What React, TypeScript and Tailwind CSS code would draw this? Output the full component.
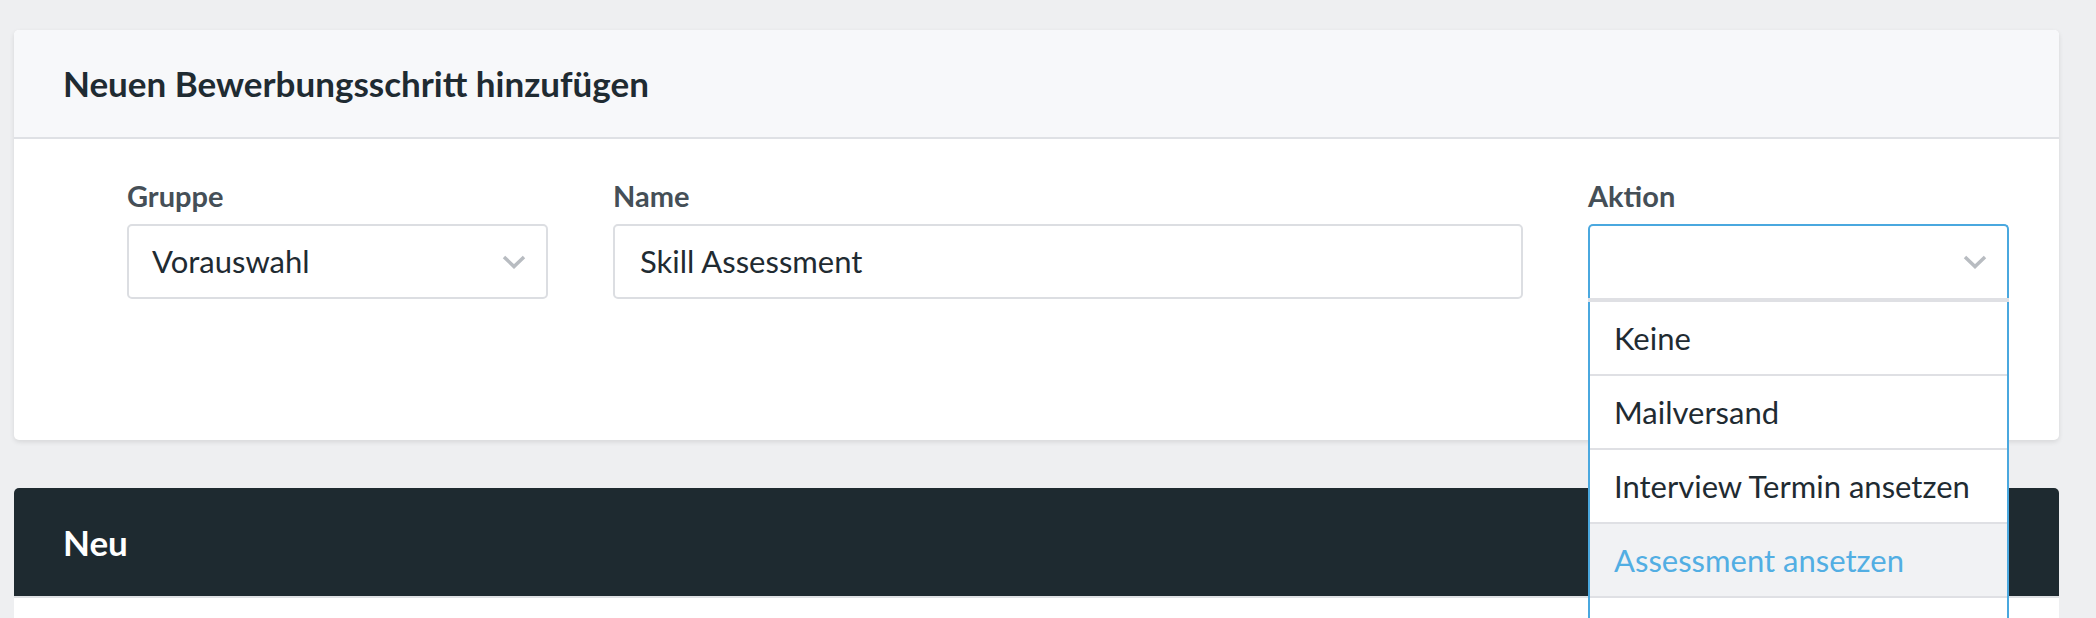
import React from 'react';

function Chevron() {
  return (
    <svg width="24" height="14" viewBox="0 0 24 14" className="shrink-0">
      <polyline points="2,2 12,11.5 22,2" fill="none" stroke="#b8bcc1" strokeWidth="3.5" />
    </svg>
  );
}

const actions = ['Keine', 'Mailversand', 'Interview Termin ansetzen', 'Assessment ansetzen'];

export default function App() {
  return (
    <div className="h-[618px] overflow-hidden bg-[#eeeff1] pl-[14px] pr-[37px] pt-[30px] font-[Lato,'Noto_Sans',sans-serif]">
      <section className="rounded-[5px] bg-white shadow-[0_2px_5px_rgba(0,0,0,0.1)]">
        <header className="flex h-[109px] items-center rounded-t-[5px] border-b-2 border-[#dfe1e5] bg-[#f7f8fa] px-[49px]">
          <h2 className="text-[35px] font-bold leading-none text-[#1f2b32]">Neuen Bewerbungsschritt hinzufügen</h2>
        </header>
        <div className="flex h-[301px] gap-[65px] pl-[113px] pr-[50px] pt-[40px]">
          <div className="w-[421px]">
            <label className="mb-[12px] block text-[29px] font-bold leading-[33px] text-[#454f57]">Gruppe</label>
            <div className="flex h-[75px] items-center justify-between rounded-[5px] border-2 border-[#dcdee2] pl-[23px] pr-[20px]">
              <span className="text-[31px] text-[#1f2b32]">Vorauswahl</span>
              <Chevron />
            </div>
          </div>
          <div className="flex-1">
            <label className="mb-[12px] block text-[29px] font-bold leading-[33px] text-[#454f57]">Name</label>
            <div className="flex h-[75px] items-center rounded-[5px] border-2 border-[#dcdee2] pl-[25px]">
              <span className="text-[31px] text-[#1f2b32]">Skill Assessment</span>
            </div>
          </div>
          <div className="relative w-[421px]">
            <label className="mb-[12px] block text-[29px] font-bold leading-[33px] text-[#454f57]">Aktion</label>
            <div className="flex h-[74px] items-center justify-end rounded-t-[5px] border-2 border-b-0 border-[#4aa8df] pr-[20px]">
              <Chevron />
            </div>
            <div className="absolute left-0 right-0 top-[119px] z-10 bg-white">
              <div className="h-[4px] bg-[#dfe0e4]" />
              <ul className="border-x-2 border-[#4aa8df]">
                {actions.map((a, i) => (
                  <li
                    key={a}
                    className={`flex h-[74px] items-center border-b-2 border-[#dfe0e4] pl-[24px] text-[31px] ${
                      i === 3 ? 'bg-[#f1f2f4] text-[#52aee3]' : 'bg-white text-[#1f2b32]'
                    }`}
                  >
                    {a}
                  </li>
                ))}
                <li className="h-[74px] bg-white" />
              </ul>
            </div>
          </div>
        </div>
      </section>

      <section className="mt-[48px] rounded-t-[5px] bg-white">
        <header className="flex h-[110px] items-center rounded-t-[5px] border-b-2 border-[#dfe1e4] bg-[#1e2a30] px-[49px]">
          <h2 className="text-[35px] font-bold leading-none text-white">Neu</h2>
        </header>
        <div className="h-[60px]" />
      </section>
    </div>
  );
}
